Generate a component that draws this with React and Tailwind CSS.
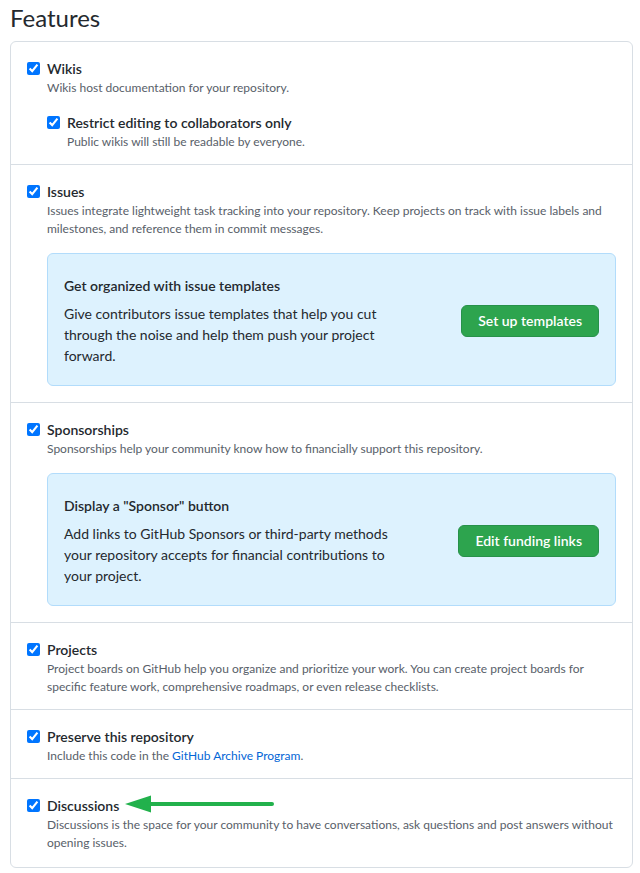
import React from "react";

const font = { fontFamily: 'Lato, "Noto Sans", sans-serif' };

function Check({ nested }) {
  return (
    <input
      type="checkbox"
      defaultChecked
      className="w-[13px] h-[13px] m-0 accent-[#0075ff] shrink-0 mt-[4px]"
    />
  );
}

function Item({ label, children, nested }) {
  return (
    <div className="flex items-start gap-[7px]">
      <Check nested={nested} />
      <div className="flex-1 min-w-0">
        <div className="text-[14px] leading-[21px] font-semibold text-[#24292e]">{label}</div>
        {children}
      </div>
    </div>
  );
}

function Desc({ children }) {
  return <p className="text-[12px] leading-[18px] text-[#586069]">{children}</p>;
}

function Callout({ title, text, button }) {
  return (
    <div className="mt-[15px] flex items-center justify-between rounded-[6px] border border-[#b2dcfb] bg-[#ddf2fe] pl-4 pr-4 pt-[21px] pb-[19px]">
      <div className="w-[340px]">
        <div className="text-[14px] leading-[21px] font-semibold text-[#24292e]">{title}</div>
        <p className="mt-[7px] text-[14px] leading-[21px] text-[#24292e]">{text}</p>
      </div>
      <button className="h-[32px] px-4 rounded-[6px] bg-[#2da44e] border border-[#27914a] text-white text-[14px] font-semibold">
        {button}
      </button>
    </div>
  );
}

export default function App() {
  return (
    <div className="bg-white min-h-[873px] pl-[10px]" style={font}>
      <h2 className="text-[24px] leading-[36px] font-normal text-[#24292e] mb-[5px]">Features</h2>
      <div className="w-[623px] rounded-[6px] border border-[#d8dee4] divide-y divide-[#d8dee4]">
        <div className="px-4 pt-4 pb-[13px]">
          <Item label="Wikis">
            <Desc>Wikis host documentation for your repository.</Desc>
            <div className="mt-[15px]">
              <Item label="Restrict editing to collaborators only" nested>
                <Desc>Public wikis will still be readable by everyone.</Desc>
              </Item>
            </div>
          </Item>
        </div>
        <div className="px-4 pt-4 pb-4">
          <Item label="Issues">
            <Desc>
              Issues integrate lightweight task tracking into your repository. Keep projects on track with issue labels and milestones, and reference them in commit messages.
            </Desc>
            <Callout
              title="Get organized with issue templates"
              text="Give contributors issue templates that help you cut through the noise and help them push your project forward."
              button="Set up templates"
            />
          </Item>
        </div>
        <div className="px-4 pt-4 pb-4">
          <Item label="Sponsorships">
            <Desc>Sponsorships help your community know how to financially support this repository.</Desc>
            <Callout
              title={'Display a "Sponsor" button'}
              text="Add links to GitHub Sponsors or third-party methods your repository accepts for financial contributions to your project."
              button="Edit funding links"
            />
          </Item>
        </div>
        <div className="px-4 pt-4 pb-[13px]">
          <Item label="Projects">
            <Desc>
              Project boards on GitHub help you organize and prioritize your work. You can create project boards for specific feature work, comprehensive roadmaps, or even release checklists.
            </Desc>
          </Item>
        </div>
        <div className="px-4 pt-4 pb-[13px]">
          <Item label="Preserve this repository">
            <Desc>
              Include this code in the <span className="text-[#0366d6]">GitHub Archive Program</span>.
            </Desc>
          </Item>
        </div>
        <div className="relative px-4 pt-4 pb-[15px]">
          <Item label="Discussions">
            <Desc>
              Discussions is the space for your community to have conversations, ask questions and post answers without opening issues.
            </Desc>
          </Item>
          <svg className="absolute left-[113px] top-[15px]" width="152" height="20" viewBox="0 0 152 20">
            <polygon points="1,10 27,1.5 27,18.5" fill="#22b14c" />
            <line x1="25" y1="10" x2="148" y2="10" stroke="#22b14c" strokeWidth="4" strokeLinecap="round" />
          </svg>
        </div>
      </div>
    </div>
  );
}
